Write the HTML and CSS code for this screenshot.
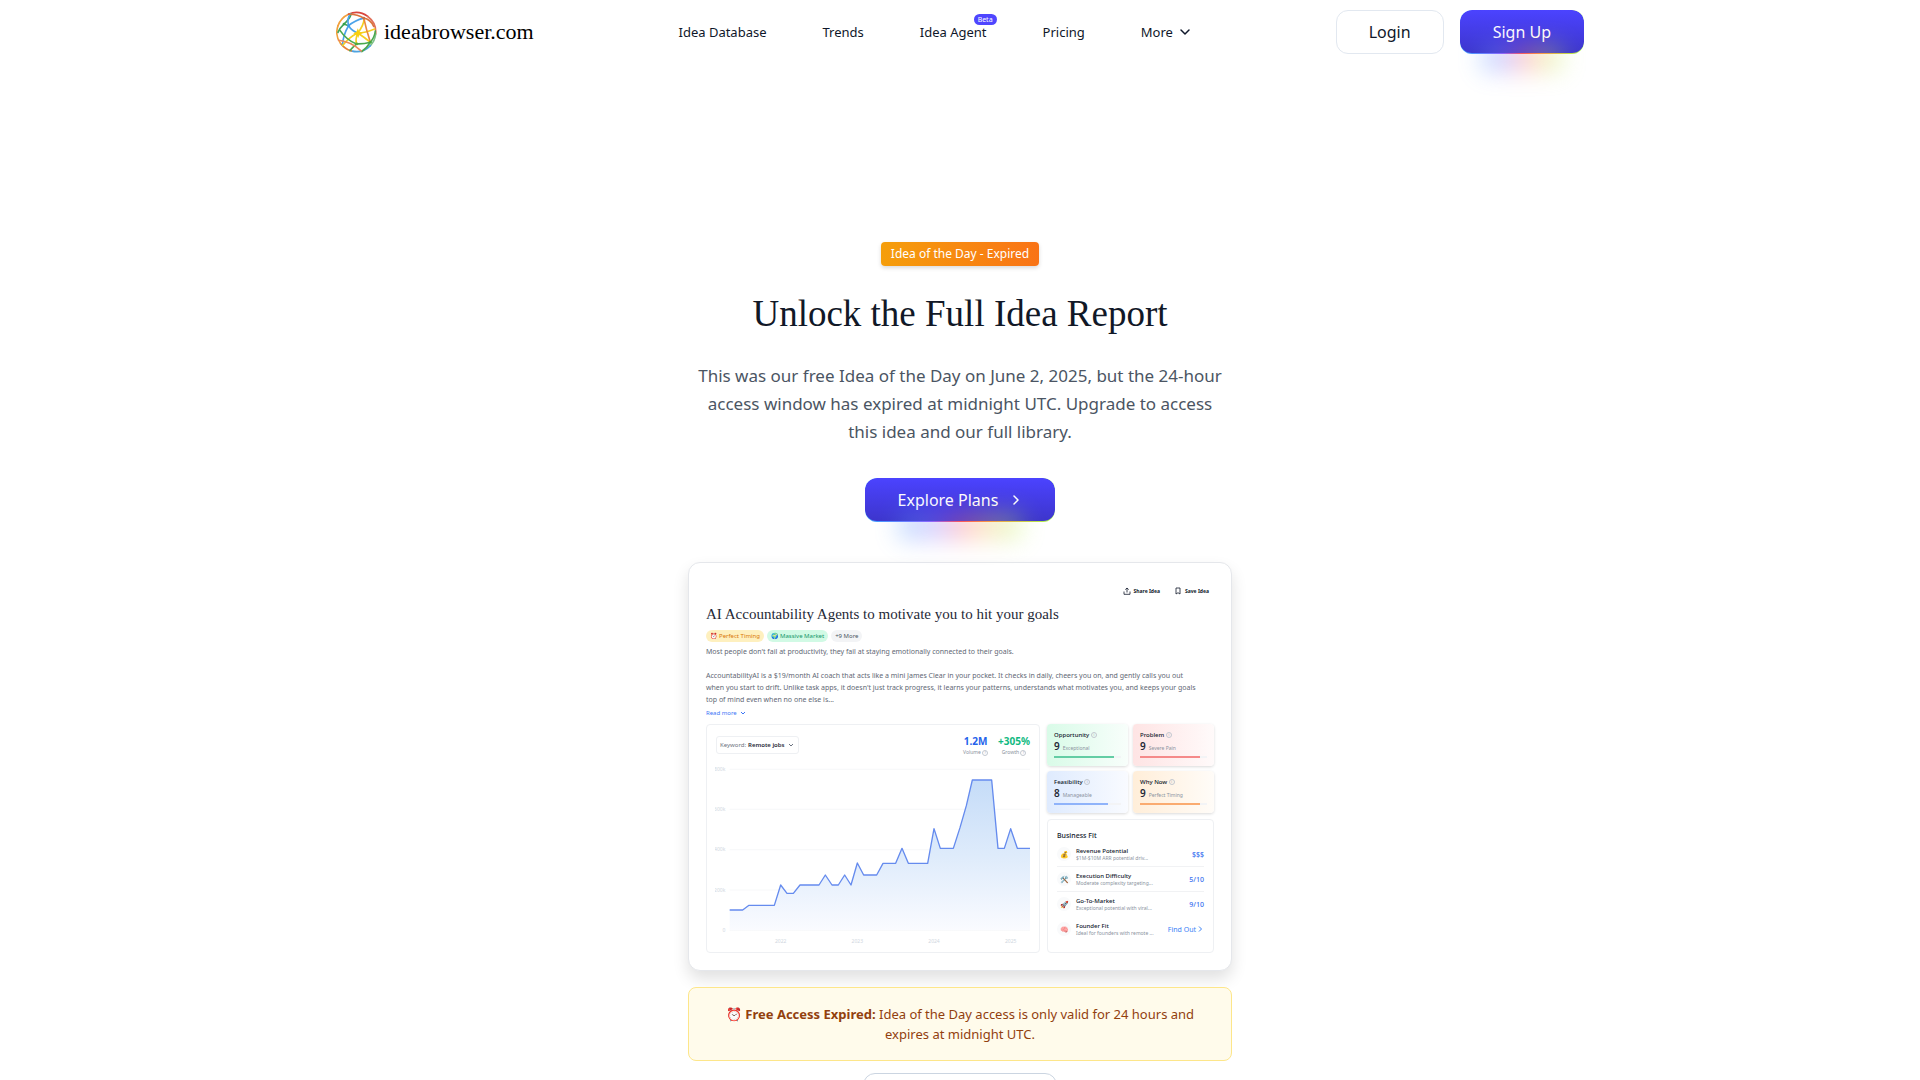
FILE: index.html
```html
<!DOCTYPE html>
<html lang="en">
<head>
<meta charset="utf-8">
<meta name="viewport" content="width=device-width, initial-scale=1">
<title>Unlock the Full Idea Report - ideabrowser.com</title>
<link rel="stylesheet" href="styles.css">
</head>
<body>
<header class="site-header">
  <a class="brand" href="#">
    <svg class="brand-mark" viewBox="46 34 124 126" fill="none" stroke-width="5" stroke-linecap="round" aria-hidden="true">
      <path d="M52 78A59 59 0 0 1 84 43" stroke="#f2a03d"/>
      <path d="M84 43A59 59 0 0 1 142 50" stroke="#d9453d"/>
      <path d="M142 50A59 59 0 0 1 166 103" stroke="#e0705a"/>
      <path d="M166 103A59 59 0 0 1 150 138" stroke="#7fc08a"/>
      <path d="M150 138A59 59 0 0 1 92 154" stroke="#4ea3df"/>
      <path d="M92 154A59 59 0 0 1 60 132" stroke="#e8823a"/>
      <path d="M60 132A59 59 0 0 1 52 78" stroke="#f0a03c"/>
      <path d="M70 73Q88 58 92 42M70 73Q58 84 52 98M70 73L84 78" stroke="#3fa35b"/>
      <path d="M84 78Q102 62 130 55M84 78Q66 108 66 138M84 78Q78 56 90 42M84 78Q94 94 112 100" stroke="#4aa3ea"/>
      <path d="M130 55Q112 44 86 43M130 55Q150 58 160 80" stroke="#d9743d"/>
      <path d="M112 100Q130 76 131 58M112 100Q134 100 163 88M112 100Q86 112 66 138M112 100Q104 118 108 133M112 100Q130 112 150 128" stroke="#f5cf20"/>
      <path d="M130 55Q138 92 150 128" stroke="#eb8a3c"/>
      <path d="M150 128Q163 112 165 94M150 128Q130 134 108 133M150 128Q140 144 124 156M108 133Q78 122 58 92M108 133Q96 144 88 153" stroke="#4aa94e"/>
      <path d="M54 122Q92 126 122 154" stroke="#ee8b5a"/>
      <path d="M112 86L116 96L127 100L117 105L113 115L108 105L98 101L108 96Z" fill="#f8cf10" stroke="none"/>
      <circle cx="70" cy="73" r="4" fill="#36a14b"/><circle cx="84" cy="78" r="4" fill="#3b9bea"/>
      <circle cx="130" cy="55" r="4" fill="#c96f45"/><circle cx="150" cy="128" r="4" fill="#43a63f"/>
      <circle cx="109" cy="133" r="4" fill="#5aa83a"/>
    </svg>
    <span class="brand-name">ideabrowser.com</span>
  </a>
  <nav class="main-nav">
    <a href="#">Idea Database</a>
    <a href="#">Trends</a>
    <a class="has-badge" href="#">Idea Agent<span class="beta">Beta</span></a>
    <a href="#">Pricing</a>
    <button class="more" type="button">More
      <svg class="chevron" viewBox="0 0 12 12" fill="none" stroke="currentColor" stroke-width="1.5" stroke-linecap="round" stroke-linejoin="round" aria-hidden="true"><path d="M2 4l4 4 4-4"/></svg>
    </button>
  </nav>
  <div class="actions">
    <button class="btn btn-outline" type="button">Login</button>
    <button class="btn btn-glow" type="button">Sign Up</button>
  </div>
</header>

<main class="hero">
  <span class="tag">Idea of the Day - Expired</span>
  <h1>Unlock the Full Idea Report</h1>
  <p class="lead">This was our free Idea of the Day on June 2, 2025, but the 24-hour<br>access window has expired at midnight UTC. Upgrade to access<br>this idea and our full library.</p>
  <button class="btn btn-glow" type="button">Explore Plans
    <svg class="arrow" viewBox="0 0 12 12" fill="none" stroke="currentColor" stroke-width="1.5" stroke-linecap="round" stroke-linejoin="round" aria-hidden="true"><path d="M4 2l4 4-4 4"/></svg>
  </button>

  <article class="preview">
    <div class="preview-actions">
      <button type="button"><svg viewBox="0 0 8 8" fill="none" stroke="currentColor" stroke-width=".8" aria-hidden="true"><path d="M1 4.500V7.300H7V4.500M4 5.500V1M2.300 2.600L4 1l1.700 1.600"/></svg>Share Idea</button>
      <button type="button"><svg viewBox="0 0 8 8" fill="none" stroke="currentColor" stroke-width=".8" aria-hidden="true"><path d="M2 1H6V7L4 5.700L2 7Z"/></svg>Save Idea</button>
    </div>
    <h2>AI Accountability Agents to motivate you to hit your goals</h2>
    <div class="pills">
      <span class="pill pill-amber"><span>⏰</span>Perfect Timing</span>
      <span class="pill pill-green"><span>🌍</span>Massive Market</span>
      <span class="pill pill-gray">+9 More</span>
    </div>
    <div class="summary">
      <p>Most people don't fail at productivity, they fail at staying emotionally connected to their goals.</p>
      <p>AccountabilityAI is a $19/month AI coach that acts like a mini James Clear in your pocket. It checks in daily, cheers you on, and gently calls you out<br>when you start to drift. Unlike task apps, it doesn't just track progress, it learns your patterns, understands what motivates you, and keeps your goals<br>top of mind even when no one else is...</p>
    </div>
    <a class="read-more" href="#">Read more <svg viewBox="0 0 8 8" fill="none" stroke="currentColor" aria-hidden="true"><path d="M2 3l2 2 2-2"/></svg></a>

    <div class="dashboard">
      <section class="panel chart-panel">
        <div class="chart-head">
          <button class="keyword" type="button">Keyword: <b>Remote jobs</b><svg viewBox="0 0 8 8" fill="none" stroke="currentColor" aria-hidden="true"><path d="M2 3l2 2 2-2"/></svg></button>
          <dl class="stats">
            <div class="stat"><dd class="blue">1.2M</dd><dt>Volume <i class="info">?</i></dt></div>
            <div class="stat"><dd class="green">+305%</dd><dt>Growth <i class="info">?</i></dt></div>
          </dl>
        </div>
        <svg class="chart" viewBox="105 165 948 540" role="img" aria-label="Search volume from 2021 to 2025">
          <defs><linearGradient id="area" x1="0" y1="0" x2="0" y2="1"><stop offset="0" stop-color="#c5dcf8"/><stop offset=".5" stop-color="#deebfb"/><stop offset="1" stop-color="#fafbff"/></linearGradient></defs>
          <path class="grid" d="M149 178H1050M149 298H1050M149 419H1050M149 540H1050M149 661H1050"/>
          <path fill="url(#area)" d="M149 600H188L207 586H283L302 525L321 550H340L360 525H417L436 495L456 525H475L494 495L513 525L532 459L551 495H590L609 460H647L666 415L685 460H743L762 356L781 415H820L840 353L859 287L877 210H935L954 415H973L992 356L1012 415H1050V661H149Z"/>
          <path class="line" d="M149 600H188L207 586H283L302 525L321 550H340L360 525H417L436 495L456 525H475L494 495L513 525L532 459L551 495H590L609 460H647L666 415L685 460H743L762 356L781 415H820L840 353L859 287L877 210H935L954 415H973L992 356L1012 415H1050"/>
          <g class="axis" text-anchor="end"><text x="136" y="183">800k</text><text x="136" y="303">600k</text><text x="136" y="424">400k</text><text x="136" y="545">200k</text><text x="136" y="666">0</text></g>
          <g class="axis" text-anchor="middle"><text x="302" y="698">2022</text><text x="532" y="698">2023</text><text x="762" y="698">2024</text><text x="992" y="698">2025</text></g>
        </svg>
      </section>
      <div class="side">
        <div class="scores">
          <section class="score score-green"><h3>Opportunity <i class="info">i</i></h3><p><b>9</b>Exceptional</p><div class="bar"><div style="width:90%"></div></div></section>
          <section class="score score-red"><h3>Problem <i class="info">i</i></h3><p><b>9</b>Severe Pain</p><div class="bar"><div style="width:90%"></div></div></section>
          <section class="score score-blue"><h3>Feasibility <i class="info">i</i></h3><p><b>8</b>Manageable</p><div class="bar"><div style="width:80%"></div></div></section>
          <section class="score score-orange"><h3>Why Now <i class="info">i</i></h3><p><b>9</b>Perfect Timing</p><div class="bar"><div style="width:90%"></div></div></section>
        </div>
        <section class="panel fit">
          <h3>Business Fit</h3>
          <ul>
            <li><span class="fit-icon">💰</span><div><h4>Revenue Potential</h4><p>$1M-$10M ARR potential driv...</p></div><strong>$$$</strong></li>
            <li><span class="fit-icon">🛠️</span><div><h4>Execution Difficulty</h4><p>Moderate complexity targeting...</p></div><strong>5/10</strong></li>
            <li><span class="fit-icon">🚀</span><div><h4>Go-To-Market</h4><p>Exceptional potential with viral...</p></div><strong>9/10</strong></li>
            <li><span class="fit-icon">🧠</span><div><h4>Founder Fit</h4><p>Ideal for founders with remote ...</p></div><a href="#">Find Out <svg viewBox="0 0 8 8" fill="none" stroke="currentColor" aria-hidden="true"><path d="M3 1.500L5.500 4L3 6.500"/></svg></a></li>
          </ul>
        </section>
      </div>
    </div>
  </article>

  <p class="notice">⏰ <strong>Free Access Expired:</strong> Idea of the Day access is only valid for 24 hours and<br>expires at midnight UTC.</p>
  <button class="btn btn-outline btn-wide" type="button"></button>
</main>
</body>
</html>
```
FILE: styles.css
```css
* { box-sizing: border-box; }

body {
  margin: 0;
  background: #fff;
  color: #0f172a;
  font-family: "Noto Sans", "Open Sans", sans-serif;
  font-size: 13px;
}

h1, h2, h3, h4, p, ul, dl, dd { margin: 0; padding: 0; }
a { color: inherit; text-decoration: none; }
button { font: inherit; color: inherit; background: none; border: 0; padding: 0; cursor: pointer; }
svg { flex: none; }

/* Header */
.site-header {
  display: flex;
  align-items: center;
  justify-content: space-between;
  max-width: 1280px;
  height: 64px;
  margin: 0 auto;
  padding: 0 16px;
}
.brand { display: flex; align-items: center; gap: 7px; }
.brand-mark { width: 41px; height: 42px; }
.brand-name { font: 22px/32px "Liberation Serif", serif; color: #000; }
.main-nav { display: flex; align-items: center; gap: 56px; line-height: 20px; }
.has-badge { position: relative; }
.beta {
  position: absolute;
  top: -8px;
  right: -10px;
  padding: 0 4px;
  border-radius: 6px;
  background: #4f46ff;
  color: #fff;
  font-size: 7px;
  line-height: 11px;
}
.more { display: flex; align-items: center; gap: 6px; }
.chevron { width: 12px; height: 12px; }
.actions { display: flex; gap: 16px; }

/* Buttons */
.btn {
  display: flex;
  align-items: center;
  justify-content: center;
  gap: 12px;
  height: 44px;
  padding: 0 32px;
  border: 1px solid transparent;
  border-radius: 12px;
  font-size: 16px;
}
.btn-outline { border-color: #e2e8f0; background: #fff; }
.btn-glow {
  position: relative;
  border-width: 0 0 1px;
  padding: 0 33px;
  color: #fff;
  background:
    linear-gradient(#4b43ff, #3d35cc) padding-box,
    linear-gradient(90deg, #38a8ff, #8c5cff 35%, #ff4d4d 50%, #ff8a3c 65%, #a3ff4d) border-box;
}
.btn-glow::after {
  content: "";
  position: absolute;
  left: 18%;
  right: 18%;
  bottom: -18px;
  height: 26px;
  background: linear-gradient(90deg, #4da3ff, #a17bff 35%, #ff5c7a 50%, #ffb066 65%, #b5ff5c);
  filter: blur(12px);
  opacity: .38;
  pointer-events: none;
}
.btn-wide { width: 194px; border-color: #cbd5e1; }
.arrow { width: 12px; height: 12px; }

/* Hero */
.hero {
  display: flex;
  flex-direction: column;
  align-items: center;
  max-width: 576px;
  margin: 0 auto;
  padding: 178px 16px 48px;
}
.tag {
  padding: 0 10px;
  border-radius: 4px;
  background: linear-gradient(90deg, #f59e0b, #f97316);
  box-shadow: 0 2px 4px rgba(0, 0, 0, .15);
  color: #fff;
  font-size: 12px;
  line-height: 24px;
}
h1 {
  margin-top: 24px;
  font: 37px/48px "Liberation Serif", serif;
  color: #111827;
  white-space: nowrap;
}
.lead {
  margin: 24px 0 32px;
  color: #4b5563;
  font-size: 17px;
  line-height: 28px;
  text-align: center;
  white-space: nowrap;
}
.notice {
  width: 100%;
  margin: 16px 0 12px;
  padding: 16px;
  border: 1px solid #fde68a;
  border-radius: 8px;
  background: #fffbeb;
  color: #92400e;
  line-height: 20px;
  text-align: center;
}

/* Report preview */
.preview {
  width: 100%;
  margin-top: 40px;
  padding: 23px 17px 17px;
  border: 1px solid #e5e7eb;
  border-radius: 12px;
  background: #fff;
  box-shadow: 0 8px 16px rgba(0, 0, 0, .12);
  font-size: 7px;
}
.preview-actions {
  display: flex;
  justify-content: flex-end;
  gap: 14px;
  padding-right: 5px;
  font-size: 5px;
  font-weight: 700;
  line-height: 10px;
}
.preview-actions button { display: flex; align-items: center; gap: 3px; }
.preview svg { width: 8px; height: 8px; }
.preview h2 {
  margin-top: 6px;
  font: 15px/24px "Liberation Serif", serif;
  color: #1f2937;
}
.pills { display: flex; gap: 3px; margin-top: 4px; line-height: 12px; font-size: 6px; }
.pill { display: flex; gap: 2px; padding: 0 4px; border-radius: 6px; }
.pill-amber { background: #fef0bf; color: #d97706; }
.pill-green { background: #d1fae5; color: #159669; }
.pill-gray { background: #f3f4f6; color: #4b5563; }
.summary {
  display: grid;
  gap: 12px;
  margin-top: 4px;
  color: #5f6875;
  line-height: 12px;
  white-space: nowrap;
}
.read-more { display: flex; align-items: center; gap: 2px; margin: 2px 0 6px; color: #3b76f6; font-size: 6px; line-height: 10px; }
.dashboard { display: grid; grid-template-columns: 2fr 1fr; gap: 7px; }
.panel { border: 1px solid #eef0f3; border-radius: 4px; }
.info {
  display: inline-grid;
  place-items: center;
  width: 6px;
  height: 6px;
  border: 1px solid #c3c8d0;
  border-radius: 50%;
  color: #9ca3af;
  font-size: 3px;
  font-style: normal;
  line-height: 4px;
  vertical-align: middle;
}

.chart-panel { padding: 11px 8px 7px; }
.chart-head { display: flex; justify-content: space-between; height: 29px; padding: 0 1px; }
.keyword {
  display: flex;
  align-items: center;
  gap: 2px;
  height: 18px;
  padding: 0 3px;
  border: 1px solid #eef0f3;
  border-radius: 3px;
  color: #6b7280;
  font-size: 6px;
}
.keyword b { color: #1f2937; font-weight: 600; }
.stats { display: flex; gap: 10px; text-align: center; }
.stat { display: flex; flex-direction: column; }
.stat dd { font-size: 10px; font-weight: 700; line-height: 11px; }
.stat dt { color: #8b93a0; font-size: 5px; line-height: 11px; }
.blue { color: #2563eb; }
.green { color: #10b981; }
.preview .chart { display: block; width: 100%; height: auto; }
.grid { stroke: #f3f4f6; stroke-width: 2; }
.line { fill: none; stroke: #658bee; stroke-width: 4; stroke-linejoin: round; }
.axis { fill: #cfd6e0; font-size: 15px; }

.side { display: flex; flex-direction: column; gap: 6px; }
.scores { display: grid; grid-template-columns: 1fr 1fr; gap: 5px; }
.score {
  padding: 6px 7px 8px;
  border-radius: 4px;
  box-shadow: 0 1px 3px rgba(0, 0, 0, .15);
}
.score h3 { height: 10px; font-size: 6px; font-weight: 500; line-height: 10px; }
.score p { display: flex; align-items: baseline; gap: 3px; height: 13px; color: #8b93a0; font-size: 5px; line-height: 13px; }
.score b { color: #1f2937; font-size: 10px; font-weight: 600; }
.bar { height: 2px; margin-top: 3px; background: #f3f4f6; }
.bar div { height: 100%; background: var(--accent); }
.score-green { --accent: #63cda4; background: linear-gradient(90deg, #d9fbe8, #f8fefb); }
.score-red { --accent: #f58a8a; background: linear-gradient(90deg, #fee4e4, #fffafa); }
.score-blue { --accent: #8fb3fa; background: linear-gradient(90deg, #dfebfe, #f9fbff); }
.score-orange { --accent: #faab70; background: linear-gradient(90deg, #ffeed9, #fffcf8); }

.fit { flex: 1; padding: 10px 9px 0; }
.fit h3 { font-size: 7px; font-weight: 500; line-height: 12px; }
.fit ul { list-style: none; }
.fit li {
  display: flex;
  align-items: center;
  gap: 5px;
  height: 25px;
  border-bottom: 1px solid #f1f2f4;
}
.fit li:nth-child(n+3) { border-color: transparent; }
.fit li div { flex: 1; white-space: nowrap; }
.fit-icon {
  display: grid;
  place-items: center;
  width: 14px;
  height: 14px;
  border-radius: 50%;
  background: #f9fafb;
}
.fit h4 { font-size: 6px; font-weight: 500; line-height: 8px; }
.fit p { color: #8b93a0; font-size: 5px; line-height: 7px; }
.fit strong { color: #3b70f0; font-size: 7px; font-weight: 500; }
.fit a { display: flex; align-items: center; color: #3b82f6; }
```
